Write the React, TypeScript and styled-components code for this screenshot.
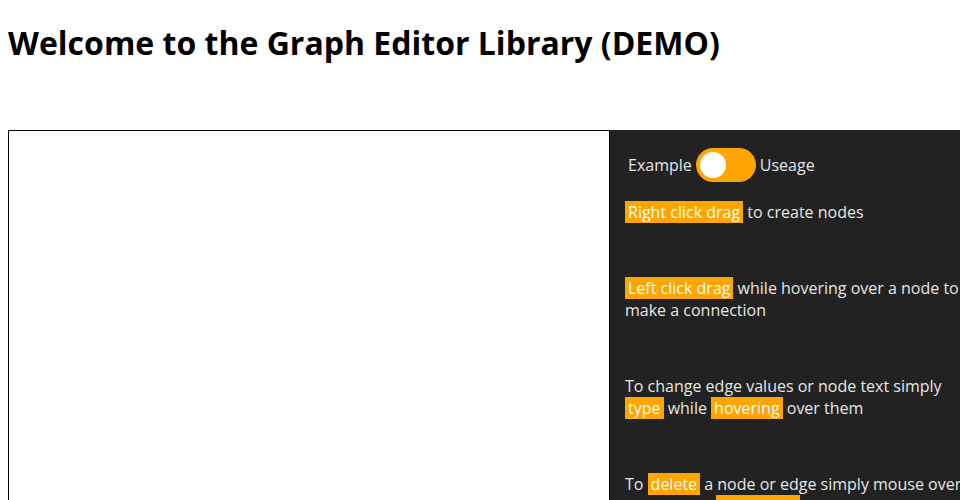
import React from "react";
import styled, { createGlobalStyle } from "styled-components";

const Global = createGlobalStyle`
  html, body {
    margin: 0;
    padding: 0;
    overflow: hidden;
    background: #ffffff;
    font-family: "Open Sans", "Noto Sans", sans-serif;
  }
`;

const Page = styled.div`
  padding: 0 8px;
`;

const Title = styled.h1`
  margin: 21px 0 0;
  font-size: 32px;
  line-height: 44px;
  font-weight: 700;
  color: #000;
  white-space: nowrap;
`;

const Editor = styled.div`
  margin-top: 65px;
  display: flex;
  align-items: stretch;
  width: max-content;
`;

const Canvas = styled.div`
  width: 600px;
  height: 600px;
  border: 1px solid #000;
  background: #fff;
  flex-shrink: 0;
`;

const Panel = styled.div`
  width: 342px;
  padding: 18px 15px;
  background: #222222;
  color: #e6e6e6;
  font-size: 16px;
  flex-shrink: 0;
`;

const ToggleRow = styled.div`
  display: flex;
  align-items: center;
  gap: 4px;
  padding-left: 3px;
`;

const Switch = styled.div`
  width: 60px;
  height: 34px;
  border-radius: 17px;
  background: #ffa500;
  display: flex;
  align-items: center;
  padding: 0 4px;
  box-sizing: border-box;
`;

const Knob = styled.div`
  width: 26px;
  height: 26px;
  border-radius: 50%;
  background: #ffffff;
`;

const Instructions = styled.div`
  margin-top: 19px;
  display: flex;
  flex-direction: column;
  gap: 54px;
`;

const Para = styled.p`
  margin: 0;
  line-height: 22px;
`;

const Mark = styled.span`
  background: #ffa500;
  color: #ffffff;
  padding: 0 3px;
`;

export default function App() {
  return (
    <>
      <Global />
      <Page>
        <Title>Welcome to the Graph Editor Library (DEMO)</Title>
        <Editor>
          <Canvas />
          <Panel>
            <ToggleRow>
              <span>Example</span>
              <Switch>
                <Knob />
              </Switch>
              <span>Useage</span>
            </ToggleRow>
            <Instructions>
              <Para>
                <Mark>Right click drag</Mark> to create nodes
              </Para>
              <Para>
                <Mark>Left click drag</Mark> while hovering over a node to make a connection
              </Para>
              <Para>
                To change edge values or node text simply <Mark>type</Mark> while{" "}
                <Mark>hovering</Mark> over them
              </Para>
              <Para>
                To <Mark>delete</Mark> a node or edge simply mouse over it and press{" "}
                <Mark>backspace</Mark>
              </Para>
            </Instructions>
          </Panel>
        </Editor>
      </Page>
    </>
  );
}
